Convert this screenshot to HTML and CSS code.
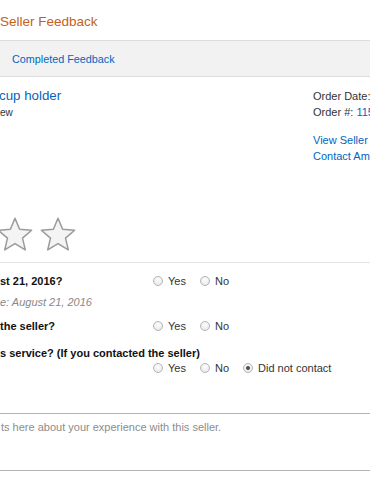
FILE: index.html
```html
<!DOCTYPE html>
<html lang="en">
<head>
<meta charset="utf-8">
<title>Seller Feedback</title>
<link rel="stylesheet" href="styles.css">
</head>
<body>
<div class="page">
  <h1 class="title">Seller Feedback</h1>
  <nav class="tabs"><a class="tab" href="#">Completed Feedback</a></nav>

  <section class="order">
    <div class="product">
      <a class="product-name" href="#">cup holder</a>
      <div class="product-sub">ew</div>
    </div>
    <div class="order-info">
      <div class="line">Order Date:</div>
      <div class="line">Order #: <a href="#">115</a></div>
      <a class="line link gap" href="#">View Seller</a>
      <a class="line link" href="#">Contact Am</a>
    </div>
  </section>

  <div class="stars">
    <svg class="star" viewBox="0 0 36 34" width="36" height="34"><polygon points="18,1.2 22.64,12.31 34.64,13.29 25.51,21.14 28.29,32.86 18,26.6 7.71,32.86 10.49,21.14 1.36,13.29 13.36,12.31"/></svg>
    <svg class="star" viewBox="0 0 36 34" width="36" height="34"><polygon points="18,1.2 22.64,12.31 34.64,13.29 25.51,21.14 28.29,32.86 18,26.6 7.71,32.86 10.49,21.14 1.36,13.29 13.36,12.31"/></svg>
  </div>

  <div class="questions">
    <div class="row">
      <div class="label">st 21, 2016?</div>
      <div class="options">
        <span class="opt"><span class="radio"></span>Yes</span>
        <span class="opt"><span class="radio"></span>No</span>
      </div>
    </div>
    <div class="note">e: August 21, 2016</div>
    <div class="row r2">
      <div class="label">the seller?</div>
      <div class="options">
        <span class="opt"><span class="radio"></span>Yes</span>
        <span class="opt"><span class="radio"></span>No</span>
      </div>
    </div>
    <div class="label r3">s service? (If you contacted the seller)</div>
    <div class="options indent">
      <span class="opt"><span class="radio"></span>Yes</span>
      <span class="opt"><span class="radio"></span>No</span>
      <span class="opt"><span class="radio checked"></span>Did not contact</span>
    </div>
  </div>

  <div class="comments">ts here about your experience with this seller.</div>
</div>
</body>
</html>
```

FILE: styles.css
```css
html, body {
  margin: 0;
  padding: 0;
  background: #fff;
  overflow: hidden;
}
body {
  font-family: "Liberation Sans", Arial, sans-serif;
  color: #333;
  font-size: 11px;
}
a { text-decoration: none; color: #0066c0; }
.page {
  width: 370px;
  display: flex;
  flex-direction: column;
  white-space: nowrap;
}
.title {
  margin: 0;
  padding-top: 14px;
  height: 26px;
  line-height: 16px;
  font-size: 13.5px;
  font-weight: normal;
  color: #c45f1c;
}
.tabs {
  height: 34px;
  background: #f2f2f2;
  border-top: 1px solid #dcdcdc;
  border-bottom: 1px solid #dcdcdc;
  display: flex;
  align-items: center;
  padding-left: 12px;
  padding-top: 1px;
}
.tab { font-size: 10.8px; }
.order {
  display: flex;
  justify-content: space-between;
  padding-top: 11px;
}
.product { display: flex; flex-direction: column; }
.product-name {
  font-size: 13.3px;
  line-height: 16px;
  margin-left: -1px;
}
.product-sub {
  font-size: 10px;
  line-height: 14px;
  padding-top: 2px;
  color: #333;
}
.order-info {
  width: 57px;
  display: flex;
  flex-direction: column;
}
.line { line-height: 16px; display: block; }
.link { color: #0066c0; }
.gap { margin-top: 12px; }
.stars {
  display: flex;
  gap: 7px;
  margin-left: -3px;
  margin-top: 53px;
  height: 34px;
}
.star polygon {
  fill: #f4f4f4;
  stroke: #9a9a9a;
  stroke-width: 1.5;
  stroke-linejoin: round;
}
.questions {
  margin-top: 11px;
  border-top: 1px solid #e4e4e4;
  padding-top: 11px;
  display: flex;
  flex-direction: column;
}
.row { display: flex; line-height: 14px; }
.label {
  font-weight: bold;
  line-height: 14px;
  width: 153px;
  color: #111;
}
.r3 { width: auto; margin-top: 13px; }
.r2 { margin-top: 10px; }
.note {
  font-style: italic;
  color: #888;
  line-height: 14px;
  margin-top: 7px;
}
.options {
  display: flex;
  gap: 14px;
  line-height: 14px;
  color: #333;
}
.indent { padding-left: 153px; margin-top: 1px; }
.opt { display: flex; align-items: center; gap: 5px; }
.radio {
  width: 10px;
  height: 10px;
  box-sizing: border-box;
  border-radius: 50%;
  border: 1px solid #b4b4b4;
  background: radial-gradient(circle at 50% 35%, #fdfdfd 0%, #e4e4e4 100%);
  display: flex;
  align-items: center;
  justify-content: center;
}
.radio.checked::after {
  content: "";
  width: 4px;
  height: 4px;
  border-radius: 50%;
  background: #4a4a4a;
}
.comments {
  margin-top: 38px;
  margin-left: -10px;
  margin-right: -10px;
  height: 50px;
  border: 1px solid #b3b3b3;
  padding: 6px 10px 0;
  line-height: 14px;
  color: #8c8c8c;
}
```
